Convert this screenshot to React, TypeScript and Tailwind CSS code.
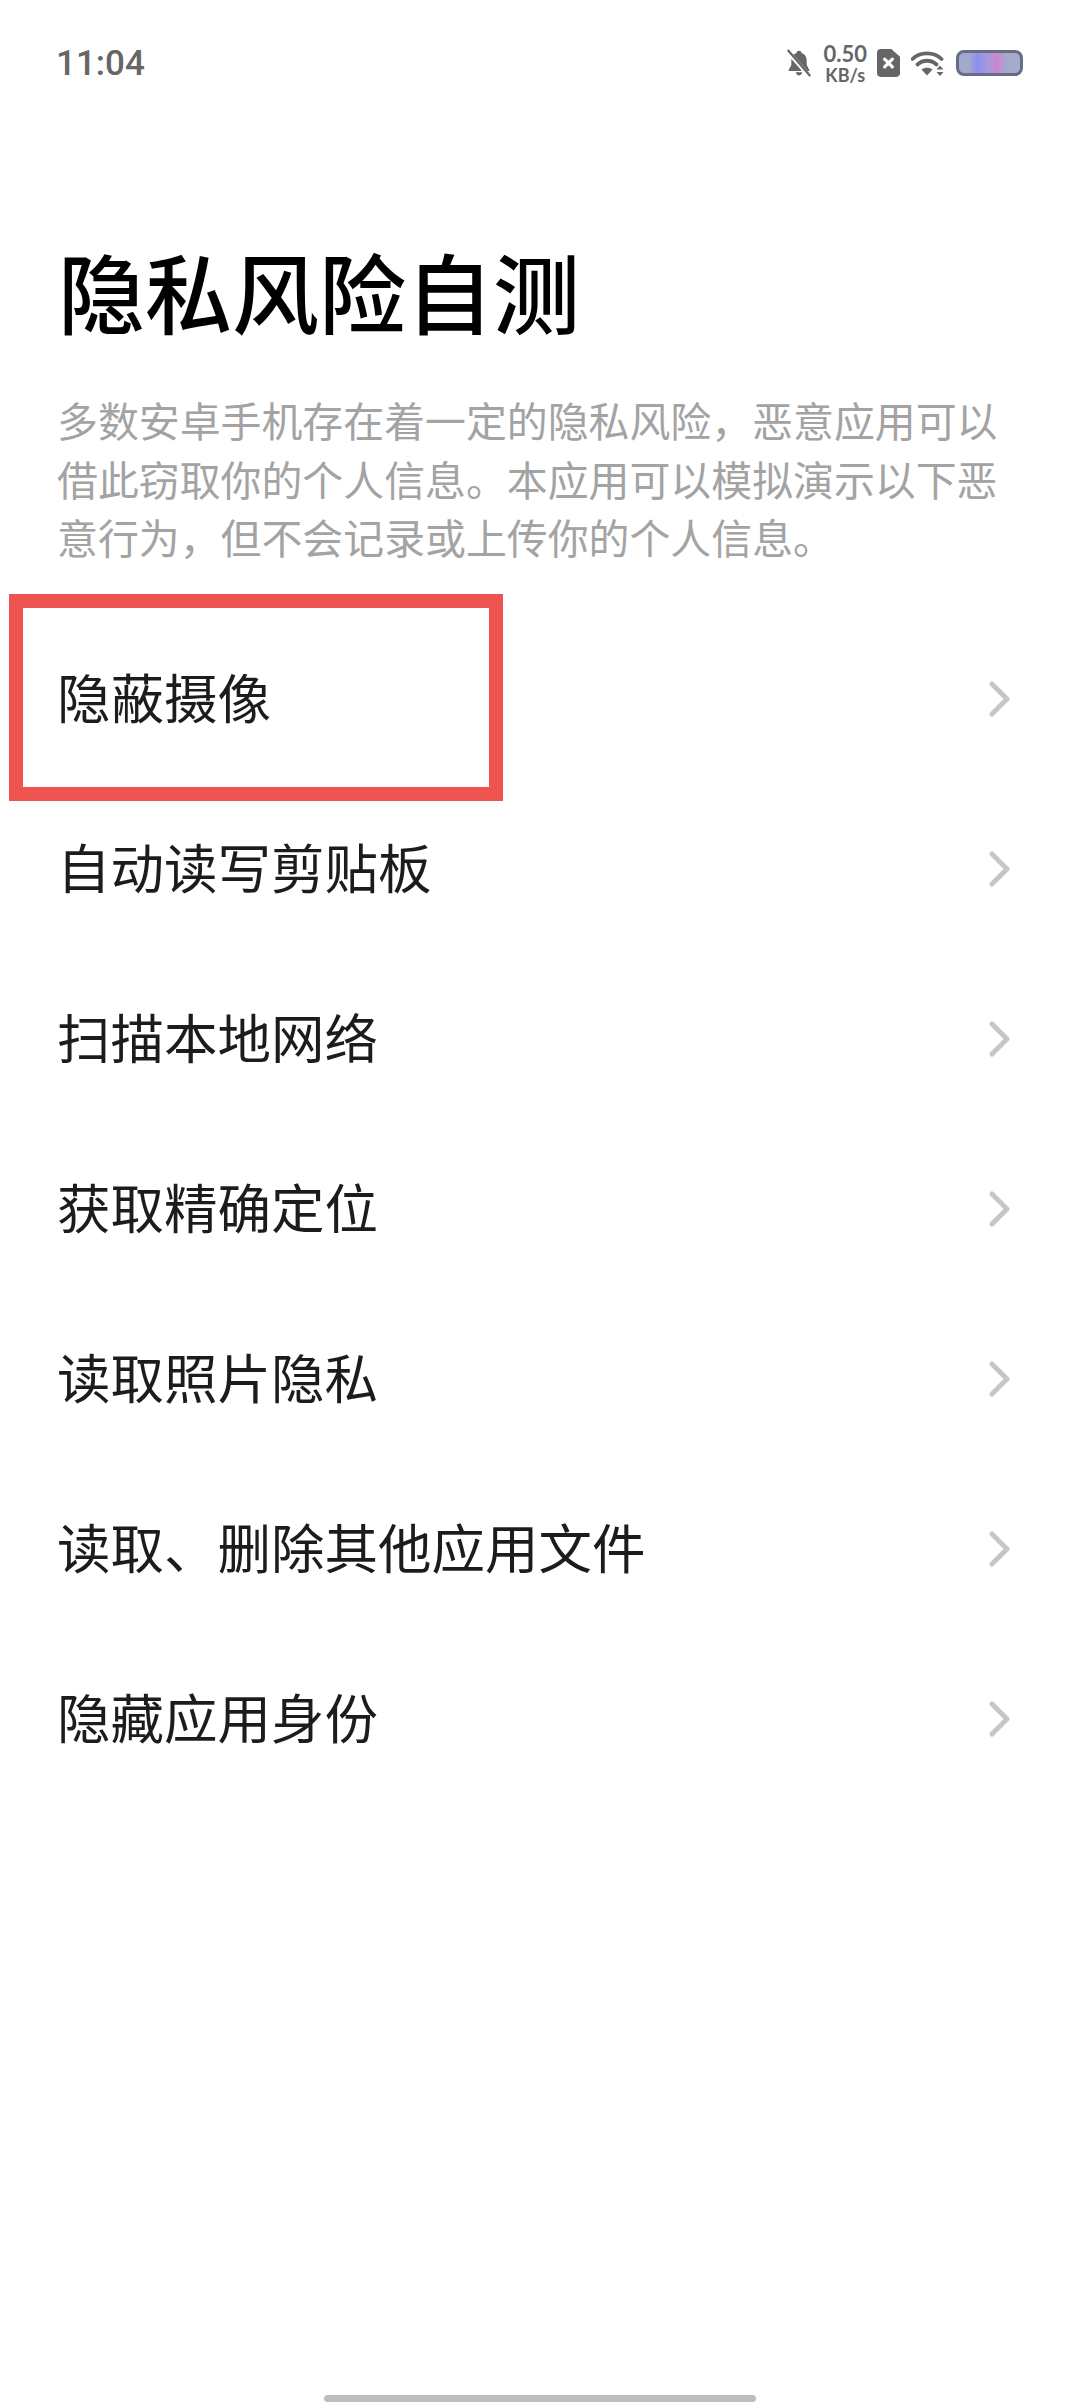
const rows = ['隐蔽摄像', '自动读写剪贴板', '扫描本地网络', '获取精确定位', '读取照片隐私', '读取、删除其他应用文件', '隐藏应用身份'];

const font = { fontFamily: '"Noto Sans CJK SC", sans-serif' };

function StatusBar() {
  return (
    <div className="flex h-[126px] items-center justify-between pl-[56px] pr-[57px] text-[#666666]">
      <span className="text-[35px] font-medium leading-none font-['Roboto',sans-serif]">11:04</span>
      <div className="flex items-center">
        <svg width="26" height="28" viewBox="0 0 26 30" className="mr-[11px]">
          <path d="M13 2c1.500 0 2.500 1 2.700 2.200 3.600 1 5.500 4 5.500 7.800v5l3.300 6.500H1.500L4.800 17v-5c0-3.800 2-6.800 5.500-7.800C10.500 3 11.500 2 13 2z" fill="#666666" />
          <path d="M9.500 25h7c-.4 2-1.800 3.500-3.500 3.500S9.900 27 9.500 25z" fill="#666666" />
          <path d="M2 4l21 24" stroke="#ffffff" strokeWidth="4.500" />
          <path d="M1 1l24 28" stroke="#666666" strokeWidth="2.400" />
        </svg>
        <div className="mr-[10px] flex flex-col items-center gap-[1px] font-['Lato',sans-serif] font-bold">
          <span className="text-[22px] leading-[22px]">0.50</span>
          <span className="text-[18px] leading-[18px]">KB/s</span>
        </div>
        <svg width="23" height="28" viewBox="0 0 24 29" className="mr-[11px]">
          <path d="M4 0h11l9 8v17a4 4 0 0 1-4 4H4a4 4 0 0 1-4-4V4a4 4 0 0 1 4-4z" fill="#666666" />
          <path d="M8 10.500l8 8M16 10.500l-8 8" stroke="#ffffff" strokeWidth="3.400" strokeLinecap="round" />
        </svg>
        <svg width="34" height="27" viewBox="0 0 34 27" className="mr-[11px]">
          <path d="M1.500 9C9 1.500 23 1.500 30.500 9" fill="none" stroke="#666666" strokeWidth="3.800" strokeLinecap="round" />
          <path d="M6.500 14.500c5.500-5 13.500-5 19 0" fill="none" stroke="#666666" strokeWidth="3.800" strokeLinecap="round" />
          <path d="M10.500 19.500c3-2.500 8-2.500 11 0l-5.500 6z" fill="#666666" />
          <path d="M29 15.500l3.500 4h-7zM29 26l3.500-4h-7z" fill="#666666" />
        </svg>
        <div className="h-[26px] w-[67px] rounded-[8px] border-[3px] border-[#666e86] bg-[linear-gradient(90deg,#a3a9cc_0%,#a3a9cc_15%,#8f8ff0_30%,#a89ad8_48%,#cc86cf_62%,#a3a9cc_78%,#a3adc8_100%)]" />
      </div>
    </div>
  );
}

export default function App() {
  return (
    <div className="relative flex h-[2408px] w-[1080px] flex-col bg-white" style={font}>
      <StatusBar />
      <h1 className="mt-[111px] pl-[58px] text-[87px] font-medium leading-[106px] text-black">隐私风险自测</h1>
      <p className="mt-[48px] w-[1020px] pl-[57px] text-[40.900px] leading-[58.500px] text-[#a3a3a3]">
        多数安卓手机存在着一定的隐私风险，恶意应用可以借此窃取你的个人信息。本应用可以模拟演示以下恶意行为，但不会记录或上传你的个人信息。
      </p>
      <div className="mt-[47px] flex flex-col">
        {rows.map((row) => (
          <div key={row} className="flex h-[170px] items-center justify-between pl-[57px] pr-[69px]">
            <span className="pb-[5px] text-[53.500px] leading-none text-[#1c1c1c]">{row}</span>
            <svg width="22" height="36" viewBox="0 0 22 36" fill="none">
              <path d="M3 3l15 15L3 33" stroke="#c6c6c6" strokeWidth="5" strokeLinecap="round" strokeLinejoin="round" />
            </svg>
          </div>
        ))}
      </div>
      <div className="absolute left-[9px] top-[594px] h-[207px] w-[494px] border-[14px] border-[#ef5350]" />
      <div className="absolute bottom-[6px] left-[324px] h-[7px] w-[432px] rounded-full bg-[#bdbdbd]" />
    </div>
  );
}
